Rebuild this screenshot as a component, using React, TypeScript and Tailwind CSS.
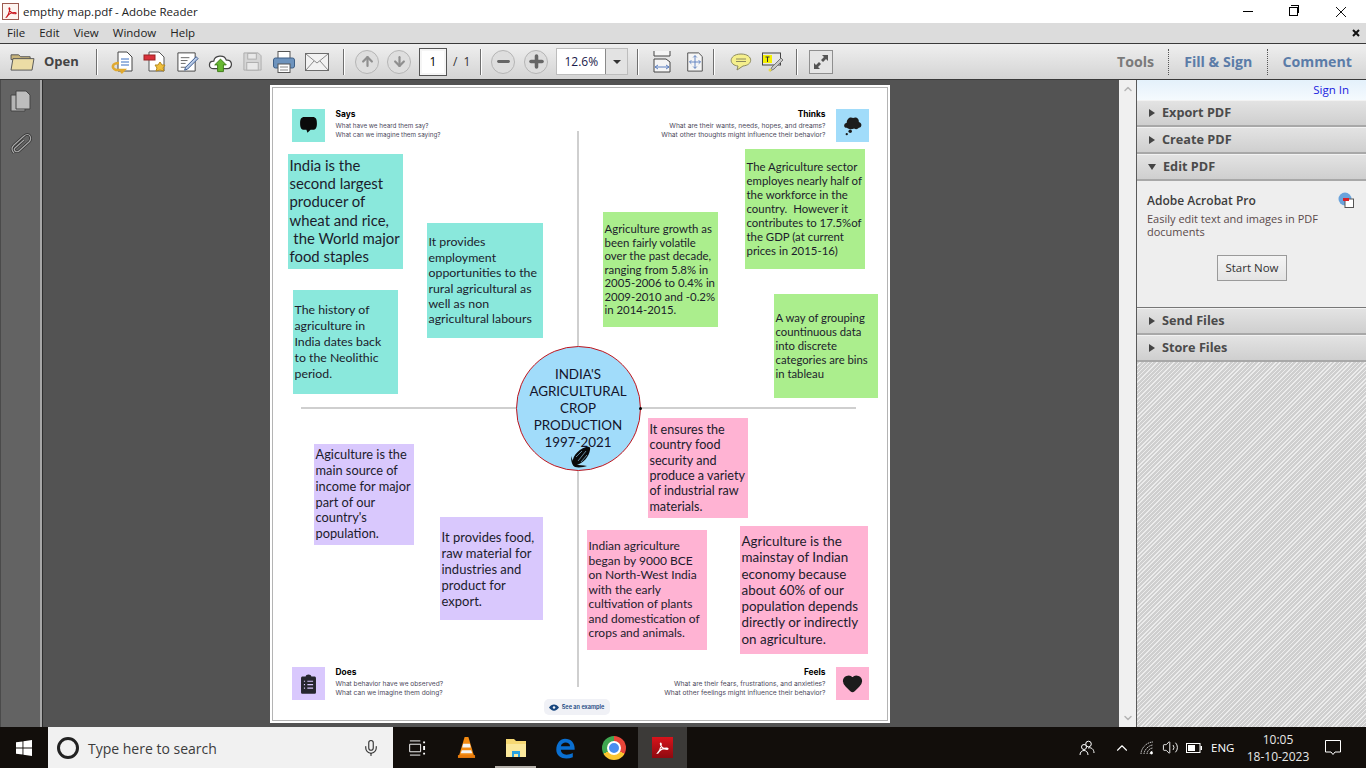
import { ChevronUp, ChevronDown, ArrowUp, ArrowDown, Minus, Plus, Mic, Heart, Volume2 } from 'lucide-react'

const UI = "font-['Open_Sans',sans-serif]"

function Sep() {
  return <div className="mx-[9px] h-[26px] w-[2px] bg-[#6f6f6f] border-r border-white" />
}

function PdfGlyph({ className }: { className?: string }) {
  return (
    <svg viewBox="0 0 24 24" className={className}>
      <path d="M4 21c3-3 5-8 6-13 .5-3-1.500-4-1.500-2 0 4 5 9 11 9 2 0 2-2-1-2-5 0-11 3-14 8z" fill="none" stroke="currentColor" strokeWidth="1.800" />
    </svg>
  )
}

function CircleBtn({ children }: { children: React.ReactNode }) {
  return (
    <div className="w-[24px] h-[24px] rounded-full border border-[#b5b5b5] bg-[#dedede] flex items-center justify-center text-[#8f8f8f]">
      {children}
    </div>
  )
}

function Toolbar() {
  return (
    <div className="h-[37px] flex items-center border-y border-[#3a3a3a] bg-gradient-to-b from-[#efefef] to-[#d4d4d4] shrink-0">
      <svg viewBox="0 0 26 22" className="w-[25px] h-[21px] ml-[10px]">
        <path d="M1 4h8l2 2h10v3H1z" fill="#c9b47a" stroke="#555" />
        <path d="M1 20l2-12h22l-2 12z" fill="#ecdca5" stroke="#555" />
      </svg>
      <span className={`${UI} ml-[9px] text-[13px] font-bold text-[#444] w-[37px]`}>Open</span>
      <div className="ml-[6px]"><Sep /></div>
      <div className="flex items-center gap-[9px] ml-[3px]">
        <svg viewBox="0 0 24 24" className="w-[24px] h-[24px]">
          <path d="M8 2h9l5 5v14H8z" fill="#fff" stroke="#444" />
          <path d="M11 9h8M11 12h8M11 15h8" stroke="#3a6fc0" />
          <path d="M9 13c-7 0-8 5-3 7l8 0-3 3" fill="none" stroke="#e0a92f" strokeWidth="2.500" />
        </svg>
        <svg viewBox="0 0 24 24" className="w-[24px] h-[24px]">
          <path d="M6 2h10l5 5v14H6z" fill="#fff" stroke="#555" />
          <rect x="1" y="5" width="11" height="5" fill="#d9303a" stroke="#922" />
          <path d="M17 12l2 3 3 0-2 3 1 3-4-1-4 1 1-3-2-3 3 0z" fill="#f0bf3a" stroke="#b58a20" />
        </svg>
        <svg viewBox="0 0 24 24" className="w-[23px] h-[23px]">
          <path d="M2 3h18v19H2z" fill="#fff" stroke="#444" />
          <path d="M5 8h9M5 11h7M5 14h5M5 18h6" stroke="#666" />
          <path d="M10 18l11-11 2 2-11 11-3 1z" fill="#b9cbe6" stroke="#3a5a90" />
        </svg>
        <svg viewBox="0 0 26 24" className="w-[25px] h-[24px]">
          <path d="M6 19c-6 0-6-8 0-8 1-6 11-7 13-1 7-1 7 9 1 9z" fill="#fff" stroke="#444" strokeWidth="1.300" />
          <path d="M13 9l6 6h-3v7h-6v-7H7z" fill="#67b832" stroke="#3d7a18" />
        </svg>
        <svg viewBox="0 0 22 22" className="w-[21px] h-[21px]">
          <path d="M2 2h15l3 3v15H2z" fill="#d5d5d5" stroke="#adadad" />
          <rect x="6" y="2.500" width="9" height="6" fill="#e8e8e8" stroke="#adadad" />
          <rect x="5" y="12" width="12" height="8" fill="#e8e8e8" stroke="#adadad" />
        </svg>
        <svg viewBox="0 0 24 24" className="w-[24px] h-[24px]">
          <rect x="6" y="1.500" width="12" height="7" fill="#fff" stroke="#555" />
          <rect x="1.500" y="8" width="21" height="10" rx="2" fill="#6d93bd" stroke="#3e5f86" />
          <rect x="6" y="14" width="12" height="8.500" fill="#fff" stroke="#555" />
          <path d="M8 17h8M8 20h8" stroke="#888" />
        </svg>
        <svg viewBox="0 0 24 18" className="w-[24px] h-[18px]">
          <rect x="0.500" y="0.500" width="23" height="17" fill="#f2f2f2" stroke="#6c6c6c" />
          <path d="M1 1l11 9L23 1M1 17l8-9M23 17l-8-9" fill="none" stroke="#8a8a8a" />
        </svg>
      </div>
      <div className="ml-[5px]"><Sep /></div>
      <div className="flex items-center gap-[8px] ml-[1px]">
        <CircleBtn><ArrowUp size={15} strokeWidth={3.500} /></CircleBtn>
        <CircleBtn><ArrowDown size={15} strokeWidth={3.500} /></CircleBtn>
      </div>
      <div className={`${UI} ml-[9px] w-[26px] h-[26px] bg-white border-2 border-[#f5f5f5] outline outline-1 outline-[#555] flex items-center justify-center text-[12px] text-black`}>1</div>
      <span className={`${UI} ml-[7px] text-[12px] text-[#333]`}>/</span>
      <span className={`${UI} ml-[6px] text-[12px] text-[#333]`}>1</span>
      <div className="ml-[1px]"><Sep /></div>
      <div className="flex items-center gap-[9px]">
        <CircleBtn><Minus size={17} strokeWidth={4} className="text-[#666]" /></CircleBtn>
        <CircleBtn><Plus size={19} strokeWidth={4.500} className="text-[#666]" /></CircleBtn>
      </div>
      <div className="ml-[8px] w-[72px] h-[27px] flex bg-white border border-[#bdbdbd]">
        <div className={`${UI} w-[48px] flex items-center justify-center text-[12px] text-[#1a1a4a]`}>12.6%</div>
        <div className="flex-1 bg-[#e3e3e3] border-l border-[#8a8a8a] flex items-center justify-center">
          <div className="w-0 h-0 border-x-[4px] border-x-transparent border-t-[4px] border-t-[#333]" />
        </div>
      </div>
      <Sep />
      <svg viewBox="0 0 18 22" className="w-[18px] h-[22px] ml-[5px]">
        <path d="M1 0v5h16V0M1 8h12l4 3v10H1z" fill="#f5f5f5" stroke="#444" />
        <path d="M2 16h14M2 16l3-2M2 16l3 2M16 16l-3-2M16 16l-3 2" stroke="#5b7fc0" fill="none" />
      </svg>
      <svg viewBox="0 0 18 22" className="w-[18px] h-[20px] ml-[15px]">
        <path d="M1 1h12l4 4v16H1z" fill="#f5f5f5" stroke="#444" />
        <path d="M9 4v14M3 11h12M9 4l-2 2M9 4l2 2M9 18l-2-2M9 18l2-2M3 11l2-2M3 11l2 2M15 11l-2-2M15 11l-2 2" stroke="#5b7fc0" fill="none" />
      </svg>
      <Sep />
      <svg viewBox="0 0 22 18" className="w-[22px] h-[18px] ml-[6px]">
        <path d="M11 1c12 0 13 11 2 12l-6 4 1-4C-2 12-1 1 11 1z" fill="#f5ef8c" stroke="#8c8a60" />
        <path d="M6 6h10M6 8.500h10" stroke="#8c8a60" />
      </svg>
      <svg viewBox="0 0 22 20" className="w-[22px] h-[20px] ml-[10px]">
        <rect x="0.500" y="1" width="18" height="12" fill="#e7e7e7" stroke="#444" />
        <rect x="1" y="3" width="9" height="8" fill="#f4f000" />
        <path d="M3.500 5h4M5.500 5v5" stroke="#333" />
        <path d="M8 19l2-4 9-9 2 2-9 9z" fill="#c9c9c9" stroke="#777" />
        <circle cx="8" cy="18" r="1.500" fill="#e8d84a" />
      </svg>
      <div className="ml-[3px]"><Sep /></div>
      <div className="ml-[2px] w-[24px] h-[24px] bg-[#e5e5e5] border border-[#8f8f8f] flex items-center justify-center">
        <svg viewBox="0 0 20 20" className="w-[20px] h-[20px]">
          <path d="M11 3h6v6l-2-2-3 3-2-2 3-3zM9 17H3v-6l2 2 3-3 2 2-3 3z" fill="#555" />
        </svg>
      </div>
      <div className={`${UI} ml-auto flex items-center h-full text-[14.200px] font-bold pt-[1px]`}>
        <span className="text-[#7a7a7a] pr-[14px]">Tools</span>
        <span className="h-[26px] border-l border-dotted border-[#555]" />
        <span className="text-[#5b7ca8] px-[15px]">Fill &amp; Sign</span>
        <span className="h-[26px] border-l border-dotted border-[#555]" />
        <span className="text-[#5b7ca8] pl-[14px] pr-[14px]">Comment</span>
      </div>
    </div>
  )
}

function PanelHead({ label, open }: { label: string; open?: boolean }) {
  return (
    <div className="h-[27px] flex items-center pl-[11px] border-b-2 border-[#a8a8a8] border-t border-t-[#f2f2f2] bg-gradient-to-b from-[#e3e3e3] to-[#cfcfcf] shrink-0">
      {open ? (
        <div className="w-0 h-0 border-x-[4px] border-x-transparent border-t-[6px] border-t-[#444]" />
      ) : (
        <div className="ml-[1px] w-0 h-0 border-y-[4px] border-y-transparent border-l-[6px] border-l-[#444]" />
      )}
      <span className={`${UI} ml-[7px] text-[12.700px] font-bold text-[#4b4b4b]`}>{label}</span>
    </div>
  )
}

function Note({ className, lines }: { className: string; lines: string[] }) {
  return (
    <div className={`absolute pl-[2px] flex flex-col justify-center text-[#1c1c2c] font-['Lato',sans-serif] whitespace-pre ${className}`}>
      {lines.map((l, i) => (
        <div key={i}>{l}</div>
      ))}
    </div>
  )
}

function Corner({ title, l1, l2, right, className, sub }: { title: string; l1: string; l2: string; right?: boolean; className: string; sub: string }) {
  return (
    <div className={`absolute font-['Inter',sans-serif] ${right ? 'text-right' : ''} ${className}`}>
      <div className="text-[8.400px] font-bold leading-[12px] text-black">{title}</div>
      <div className={`mt-[2px] leading-[9px] text-[#4d4a5c] ${sub}`}>{l1}</div>
      <div className={`leading-[9px] text-[#4d4a5c] ${sub}`}>{l2}</div>
    </div>
  )
}

function MapPage() {
  return (
    <div className="relative w-[620px] h-[638px] bg-white p-[2px] shrink-0">
      <div className="w-full h-full border border-[#b4b4b4]" />

      {/* axes */}
      <div className="absolute left-[307px] top-[46px] w-[2px] h-[556px] bg-[#cfcfcf]" />
      <div className="absolute left-[31px] top-[322px] w-[555px] h-[2px] bg-[#cfcfcf]" />

      {/* corner tiles */}
      <div className="absolute left-[22px] top-[24px] w-[33px] h-[33px] bg-[#8ae8dc] flex items-center justify-center">
        <svg viewBox="0 0 20 20" className="w-[21px] h-[21px]">
          <path d="M6 2h8c3 0 4 2 4 6s-1 6-4 6h-2l-3 3-1-3H6c-3 0-4-2-4-6s1-6 4-6z" fill="#0a0a0a" />
        </svg>
      </div>
      <Corner sub="text-[6.300px]" title="Says" l1="What have we heard them say?" l2="What can we imagine them saying?" className="left-[66px] top-[23px]" />

      <div className="absolute left-[566px] top-[24px] w-[33px] h-[33px] bg-[#a1dcfa] flex items-center justify-center">
        <svg viewBox="0 0 20 20" className="w-[23px] h-[23px]">
          <path d="M5 12c-3 0-3-4 0-4.500C5 4 8 2 10.500 3.500 13 2 16 4 15.500 7c3 .5 3 5 0 5-1 1.500-3 1.500-4 .5-2 1-5 1-6.500-.5z" fill="#1c1c1c" />
          <circle cx="8" cy="15" r="1.500" fill="#1c1c1c" />
          <circle cx="5" cy="17.500" r="1" fill="#1c1c1c" />
        </svg>
      </div>
      <Corner sub="text-[6.700px]" right title="Thinks" l1="What are their wants, needs, hopes, and dreams?" l2="What other thoughts might influence their behavior?" className="right-[64px] top-[23px]" />

      <div className="absolute left-[22px] top-[582px] w-[33px] h-[33px] bg-[#d9c8fd] flex items-center justify-center">
        <svg viewBox="0 0 20 20" className="w-[23px] h-[23px]">
          <path d="M5 4h2.500c0-2.500 5-2.500 5 0H15c1 0 1.500 .5 1.500 1.500v12c0 1-.5 1.500-1.500 1.500H5c-1 0-1.500-.5-1.500-1.500v-12C3.500 4.500 4 4 5 4z" fill="#26262e" />
          <path d="M6 8h1M9 8h5M6 11h1M9 11h5M6 14h1M9 14h5" stroke="#d9c8fd" strokeWidth="1" />
        </svg>
      </div>
      <Corner sub="text-[6.600px]" title="Does" l1="What behavior have we observed?" l2="What can we imagine them doing?" className="left-[66px] top-[581px]" />

      <div className="absolute left-[566px] top-[582px] w-[33px] h-[33px] bg-[#ffb3d3] flex items-center justify-center">
        <Heart size={21} fill="#1c1c1c" className="text-[#1c1c1c]" />
      </div>
      <Corner sub="text-[6.700px]" right title="Feels" l1="What are their fears, frustrations, and anxieties?" l2="What other feelings might influence their behavior?" className="right-[64px] top-[581px]" />

      <div className="absolute left-[274px] top-[614px] w-[66px] h-[16px] rounded-[5px] bg-[#f0f1f6] flex items-center justify-center gap-[3px] font-['Inter',sans-serif] text-[5.600px] font-semibold text-[#17457e]">
        <svg viewBox="0 0 12 8" className="w-[10px] h-[7px]">
          <path d="M0 4c3-5 9-5 12 0-3 5-9 5-12 0z" fill="#17457e" />
          <circle cx="6" cy="4" r="1.500" fill="#f0f1f6" />
        </svg>
        <span>See an example</span>
      </div>

      {/* sticky notes */}
      <Note className="left-[18px] top-[69px] w-[115px] h-[115px] pb-[2px] bg-[#8ae8dc] text-[14.900px] leading-[18.200px]" lines={['India is the', 'second largest', 'producer of', 'wheat and rice,', ' the World major', 'food staples']} />
      <Note className="left-[157px] top-[138px] w-[116px] h-[115px] bg-[#8ae8dc] text-[12.350px] leading-[15.400px]" lines={['It provides', 'employment', 'opportunities to the', 'rural agricultural as', 'well as non', 'agricultural labours']} />
      <Note className="left-[23px] top-[205px] w-[105px] h-[104px] bg-[#8ae8dc] text-[12.300px] leading-[16px]" lines={['The history of', 'agriculture in', 'India dates back', 'to the Neolithic', 'period.']} />
      <Note className="left-[333px] top-[127px] w-[115px] h-[115px] bg-[#abee8d] text-[11.400px] leading-[13.600px]" lines={['Agriculture growth as', 'been fairly volatile', 'over the past decade,', 'ranging from 5.8% in', '2005-2006 to 0.4% in', '2009-2010 and -0.2%', 'in 2014-2015.']} />
      <Note className="left-[475px] top-[64px] w-[120px] h-[120px] bg-[#abee8d] text-[11.400px] leading-[14px]" lines={['The Agriculture sector', 'employes nearly half of', 'the workforce in the', 'country.  However it', 'contributes to 17.5%of', 'the GDP (at current', 'prices in 2015-16)']} />
      <Note className="left-[504px] top-[209px] w-[104px] h-[104px] bg-[#abee8d] text-[11.300px] leading-[14px]" lines={['A way of grouping', 'countinuous data', 'into discrete', 'categories are bins', 'in tableau']} />
      <Note className="left-[44px] top-[359px] w-[100px] h-[101px] bg-[#d9c8fd] text-[12.800px] leading-[15.800px]" lines={['Agiculture is the', 'main source of', 'income for major', 'part of our', "country's", 'population.']} />
      <Note className="left-[170px] top-[432px] w-[103px] h-[103px] bg-[#d9c8fd] text-[13px] leading-[16px]" lines={['It provides food,', 'raw material for', 'industries and', 'product for', 'export.']} />
      <Note className="left-[378px] top-[333px] w-[100px] h-[100px] bg-[#ffb3d3] text-[12.600px] leading-[15.300px]" lines={['It ensures the', 'country food', 'security and', 'produce a variety', 'of industrial raw', 'materials.']} />
      <Note className="left-[317px] top-[445px] w-[120px] h-[120px] bg-[#ffb3d3] text-[12px] leading-[14.500px]" lines={['Indian agriculture', 'began by 9000 BCE', 'on North-West India', 'with the early', 'cultivation of plants', 'and domestication of', 'crops and animals.']} />
      <Note className="left-[470px] top-[441px] w-[128px] h-[128px] bg-[#ffb3d3] text-[13.400px] leading-[16.200px]" lines={['Agriculture is the', 'mainstay of Indian', 'economy because', 'about 60% of our', 'population depends', 'directly or indirectly', 'on agriculture.']} />

      {/* centre circle */}
      <div className="absolute left-[246px] top-[261px] w-[125px] h-[125px] rounded-full bg-[#a1dcfa] border-[1.500px] border-[#c0141c] flex flex-col items-center pt-[19px] font-['Lato',sans-serif] text-[13.400px] leading-[17px] text-[#14142b]">
        <div>INDIA'S</div>
        <div>AGRICULTURAL</div>
        <div>CROP</div>
        <div>PRODUCTION</div>
        <div>1997-2021</div>
        <svg viewBox="0 0 24 24" className="absolute left-[52px] top-[98px] w-[24px] h-[24px]">
          <path d="M4 20C2 13 8 5 17 2c3-1 5 0 4 3-1 7-7 13-13 15-2 .7-3.500 .7-4 0z" fill="#0a0a0a" />
          <path d="M2 11c0 5 1 9 4 11 4 1 9 0 12-1-4-1-8-1-11-1-2-2-4-5-5-9z" fill="#0a0a0a" />
          <path d="M9 16l8-10M7 12l6-6M12 17l6-7" stroke="#a1dcfa" strokeWidth=".6" />
        </svg>
      </div>
      <div className="absolute left-[369px] top-[322px] w-[3px] h-[3px] rounded-full bg-black" />
    </div>
  )
}

function TaskSlot({ children, className }: { children: React.ReactNode; className?: string }) {
  return <div className={`relative w-[49px] h-full flex items-center justify-center shrink-0 ${className ?? ''}`}>{children}</div>
}

function Taskbar() {
  return (
    <div className="h-[41px] bg-[#120e0b] flex items-center shrink-0 relative">
      <div className="w-[48px] flex items-center justify-center">
        <svg viewBox="0 0 16 16" className="w-[16px] h-[16px]">
          <path d="M0 2.300 6.500 1.400V7.500H0zM7.400 1.300 16 0V7.500H7.400zM0 8.400H6.500V14.600L0 13.700zM7.400 8.400H16V16L7.400 14.700z" fill="#fff" />
        </svg>
      </div>
      <div className="w-[345px] h-full bg-[#f1f1f1] flex items-center font-['Open_Sans',sans-serif] text-[14px] text-[#3c3c3c] pt-[1px]">
        <div className="ml-[9px] w-[22px] h-[22px] rounded-full border-[3px] border-[#222]" />
        <span className="ml-[9px]">Type here to search</span>
        <Mic size={18} strokeWidth={1.500} className="ml-auto mr-[13px] text-[#333]" />
      </div>
      <TaskSlot>
        <svg viewBox="0 0 18 16" className="w-[17px] h-[16px]">
          <path d="M1 .500h11M1 15.500h11M.700 4h11.600v8H.700z" fill="none" stroke="#fff" />
          <path d="M15 1h2v2h-2zM15 6h2v4h-2zM15 13h2v2h-2z" fill="#fff" />
        </svg>
      </TaskSlot>
      <TaskSlot>
        <svg viewBox="0 0 20 24" className="w-[19px] h-[23px]">
          <path d="M8 1h4l6 20H2z" fill="#f28a12" />
          <path d="M6.500 8h7l1 4h-9zM5 15h10l1 3H4z" fill="#f3f3f3" />
          <path d="M1 20h18v3H1z" fill="#e87b0c" />
        </svg>
      </TaskSlot>
      <TaskSlot>
        <svg viewBox="0 0 22 20" className="w-[22px] h-[22px]">
          <path d="M1 1h8l2 2h10v16H1z" fill="#f6d873" />
          <path d="M1 6h20v13H1z" fill="#fbe89b" />
          <path d="M7 19v-6h8v6h-2v-3H9v3z" fill="#2aa3e0" />
        </svg>
        <div className="absolute bottom-0 left-[4px] right-[4px] h-[2px] bg-[#b5b0aa]" />
      </TaskSlot>
      <TaskSlot>
        <svg viewBox="0 0 24 24" className="w-[22px] h-[24px]">
          <path d="M12 2C19 2 23 7 22.500 14H7.500c0 5 6 7 13 3.500v4.500c-8 3.500-18 1-18-8C2.500 7 7 2 12 2zM7.500 10h10c0-5-9-5.500-10 0z" fill="#0a6fd1" />
        </svg>
      </TaskSlot>
      <TaskSlot>
        <div className="w-[24px] h-[24px] rounded-full bg-[conic-gradient(#e8463a_0deg_120deg,#fbc531_120deg_240deg,#3fa650_240deg_360deg)] flex items-center justify-center">
          <div className="w-[10px] h-[10px] rounded-full bg-[#4a8ef0] border-2 border-white box-content" />
        </div>
      </TaskSlot>
      <TaskSlot className="bg-[#3c3a38]">
        <div className="w-[21px] h-[21px] bg-gradient-to-b from-[#d8131b] to-[#8e0a10] flex items-center justify-center text-white">
          <PdfGlyph className="w-[15px] h-[15px]" />
        </div>
      </TaskSlot>

      <div className={`ml-auto flex items-center text-white ${UI}`}>
        <svg viewBox="0 0 16 16" className="w-[16px] h-[16px] mr-[18px]">
          <circle cx="9.500" cy="4" r="2.800" fill="none" stroke="#fff" />
          <circle cx="5" cy="7" r="2.500" fill="#120e0b" stroke="#fff" />
          <path d="M1 15c0-6 8-6 8 0M9 8c3-1 6 1 6 5" fill="none" stroke="#fff" />
        </svg>
        <ChevronUp size={18} strokeWidth={1.500} className="mr-[9px]" />
        <svg viewBox="0 0 14 14" className="w-[14px] h-[14px] mr-[8px]">
          <path d="M1 13C1 7 7 1 13 1M4 13c0-4 5-9 9-9M7 13c0-3 3-6 6-6M10 13c0-1 1-3 3-3" fill="none" stroke="#c9c9c9" strokeDasharray="1.500 .7" />
          <circle cx="11.500" cy="12" r="1.400" fill="#fff" />
        </svg>
        <Volume2 size={17} strokeWidth={1.300} className="mr-[7px]" />
        <svg viewBox="0 0 16 10" className="w-[16px] h-[10px] mr-[9px]">
          <rect x=".500" y=".500" width="13.500" height="9" fill="none" stroke="#fff" />
          <rect x="2" y="2" width="7" height="6" fill="#fff" />
          <rect x="14.500" y="3" width="1.500" height="4" fill="#fff" />
        </svg>
        <span className="text-[11.500px] w-[26px]">ENG</span>
        <div className="ml-[8px] w-[66px] text-center text-[12px] leading-[17px] text-[#e8e8e8] whitespace-nowrap">
          <div>10:05</div>
          <div>18-10-2023</div>
        </div>
        <svg viewBox="0 0 16 16" className="w-[16px] h-[16px] ml-[14px] mr-[25px]">
          <path d="M.500 .500h15v11.500h-5.500l-2 2.500-2-2.500H.500z" fill="none" stroke="#fff" />
        </svg>
      </div>
    </div>
  )
}

export default function App() {
  return (
    <div className="w-[1366px] h-[768px] overflow-hidden flex flex-col bg-white">
      {/* title bar */}
      <div className={`h-[23px] flex items-center shrink-0 ${UI} text-[11.500px] text-[#222]`}>
        <div className="ml-[2px] w-[17px] h-[17px] bg-[#fdf4f0] border border-[#9b5a50] flex items-center justify-center text-[#c9141b]">
          <PdfGlyph className="w-[14px] h-[14px]" />
        </div>
        <span className="ml-[4px]">empthy map.pdf - Adobe Reader</span>
        <div className="ml-auto flex items-center text-black">
          <div className="w-[10px] h-[1px] bg-black mr-[36px]" />
          <div className="relative w-[9px] h-[9px] border border-black mr-[37px] after:content-[''] after:absolute after:left-[1px] after:-top-[3px] after:w-[8px] after:h-[8px] after:border-t after:border-r after:border-black" />
          <svg viewBox="0 0 12 12" className="w-[12px] h-[12px] mr-[19px]">
            <path d="M1 1l10 10M11 1L1 11" stroke="#111" />
          </svg>
        </div>
      </div>

      {/* menu bar */}
      <div className={`h-[20px] bg-[#dcdcdc] flex items-center shrink-0 pl-[7px] gap-[14px] ${UI} text-[11.500px] text-[#222]`}>
        <span>File</span>
        <span>Edit</span>
        <span>View</span>
        <span>Window</span>
        <span>Help</span>
        <svg viewBox="0 0 8 8" className="w-[8px] h-[8px] ml-auto mr-[6px]">
          <path d="M1 1l6 6M7 1L1 7" stroke="#111" strokeWidth="2" />
        </svg>
      </div>

      <Toolbar />

      <div className="flex-1 flex min-h-0">
        {/* nav rail */}
        <div className="w-[42px] bg-[#636363] border-l border-[#4a4a4a] border-r-2 border-r-[#a8a8a8] flex flex-col items-center pt-[10px] gap-[20px] shrink-0 relative">
          <svg viewBox="0 0 21 23" className="w-[21px] h-[23px]">
            <path d="M1 5h14v16H1z" fill="#b5b5b5" stroke="#444" />
            <path d="M6 1h10l4 4v14H6z" fill="#bdbdbd" stroke="#444" />
          </svg>
          <svg viewBox="0 0 22 24" className="w-[22px] h-[24px]">
            <path d="M4 20C1 17 2 14 4 12L14 3c2-2 5-2 6 0s1 4-1 6L9 18c-1 1-3 1-4 0s-1-2 0-3l9-8" fill="none" stroke="#2e2e2e" strokeWidth="2.600" />
            <path d="M4 20C1 17 2 14 4 12L14 3c2-2 5-2 6 0s1 4-1 6L9 18c-1 1-3 1-4 0s-1-2 0-3l9-8" fill="none" stroke="#a8a8a8" strokeWidth="1.200" />
          </svg>
          <div className="absolute right-[-3px] top-0 bottom-0 w-[1px] bg-[#2e2e2e]" />
        </div>

        {/* document viewer */}
        <div className="w-[1077px] bg-[#535353] flex justify-center pt-[5px] pr-[2px] shrink-0">
          <MapPage />
        </div>

        {/* scrollbar */}
        <div className="w-[17px] bg-[#f0f0f0] flex flex-col items-center justify-between py-[3px] shrink-0 text-[#b5b5b5]">
          <ChevronUp size={12} strokeWidth={3} />
          <ChevronDown size={12} strokeWidth={3} />
        </div>

        {/* tools panel */}
        <div className="flex-1 flex flex-col border-l border-[#5a5a5a] min-w-0">
          <div className={`h-[20px] bg-gradient-to-b from-[#e4f1fb] to-[#f5fafe] flex items-center justify-end pr-[17px] ${UI} text-[11.500px] text-[#1a1ae0] shrink-0`}>
            Sign In
          </div>
          <PanelHead label="Export PDF" />
          <PanelHead label="Create PDF" />
          <PanelHead label="Edit PDF" open />
          <div className={`h-[127px] bg-[#eeeeee] relative shrink-0 ${UI} border-b border-[#777]`}>
            <div className="absolute left-[10px] top-[11px] text-[12px] font-semibold text-[#3c3c3c]">Adobe Acrobat Pro</div>
            <div className="absolute left-[10px] top-[31px] text-[11px] leading-[13px] text-[#5a4a4a] w-[190px]">
              Easily edit text and images in PDF documents
            </div>
            <svg viewBox="0 0 16 16" className="absolute left-[201px] top-[11px] w-[16px] h-[16px]">
              <circle cx="7" cy="7" r="6.500" fill="#6aa3dc" />
              <rect x="7" y="7" width="8.500" height="8.500" fill="#fff" stroke="#555" />
              <rect x="5" y="6" width="6" height="3" fill="#d9202a" />
            </svg>
            <div className="absolute left-[80px] top-[74px] w-[70px] h-[26px] bg-gradient-to-b from-[#f4f4f4] to-[#e4e4e4] border border-[#9a9a9a] flex items-center justify-center text-[11.500px] text-[#333]">
              Start Now
            </div>
          </div>
          <PanelHead label="Send Files" />
          <PanelHead label="Store Files" />
          <div className="flex-1 bg-[repeating-linear-gradient(135deg,#cfcfcf_0px,#cfcfcf_2px,#ececec_2px,#ececec_3px)]" />
        </div>
      </div>

      <Taskbar />
    </div>
  )
}
